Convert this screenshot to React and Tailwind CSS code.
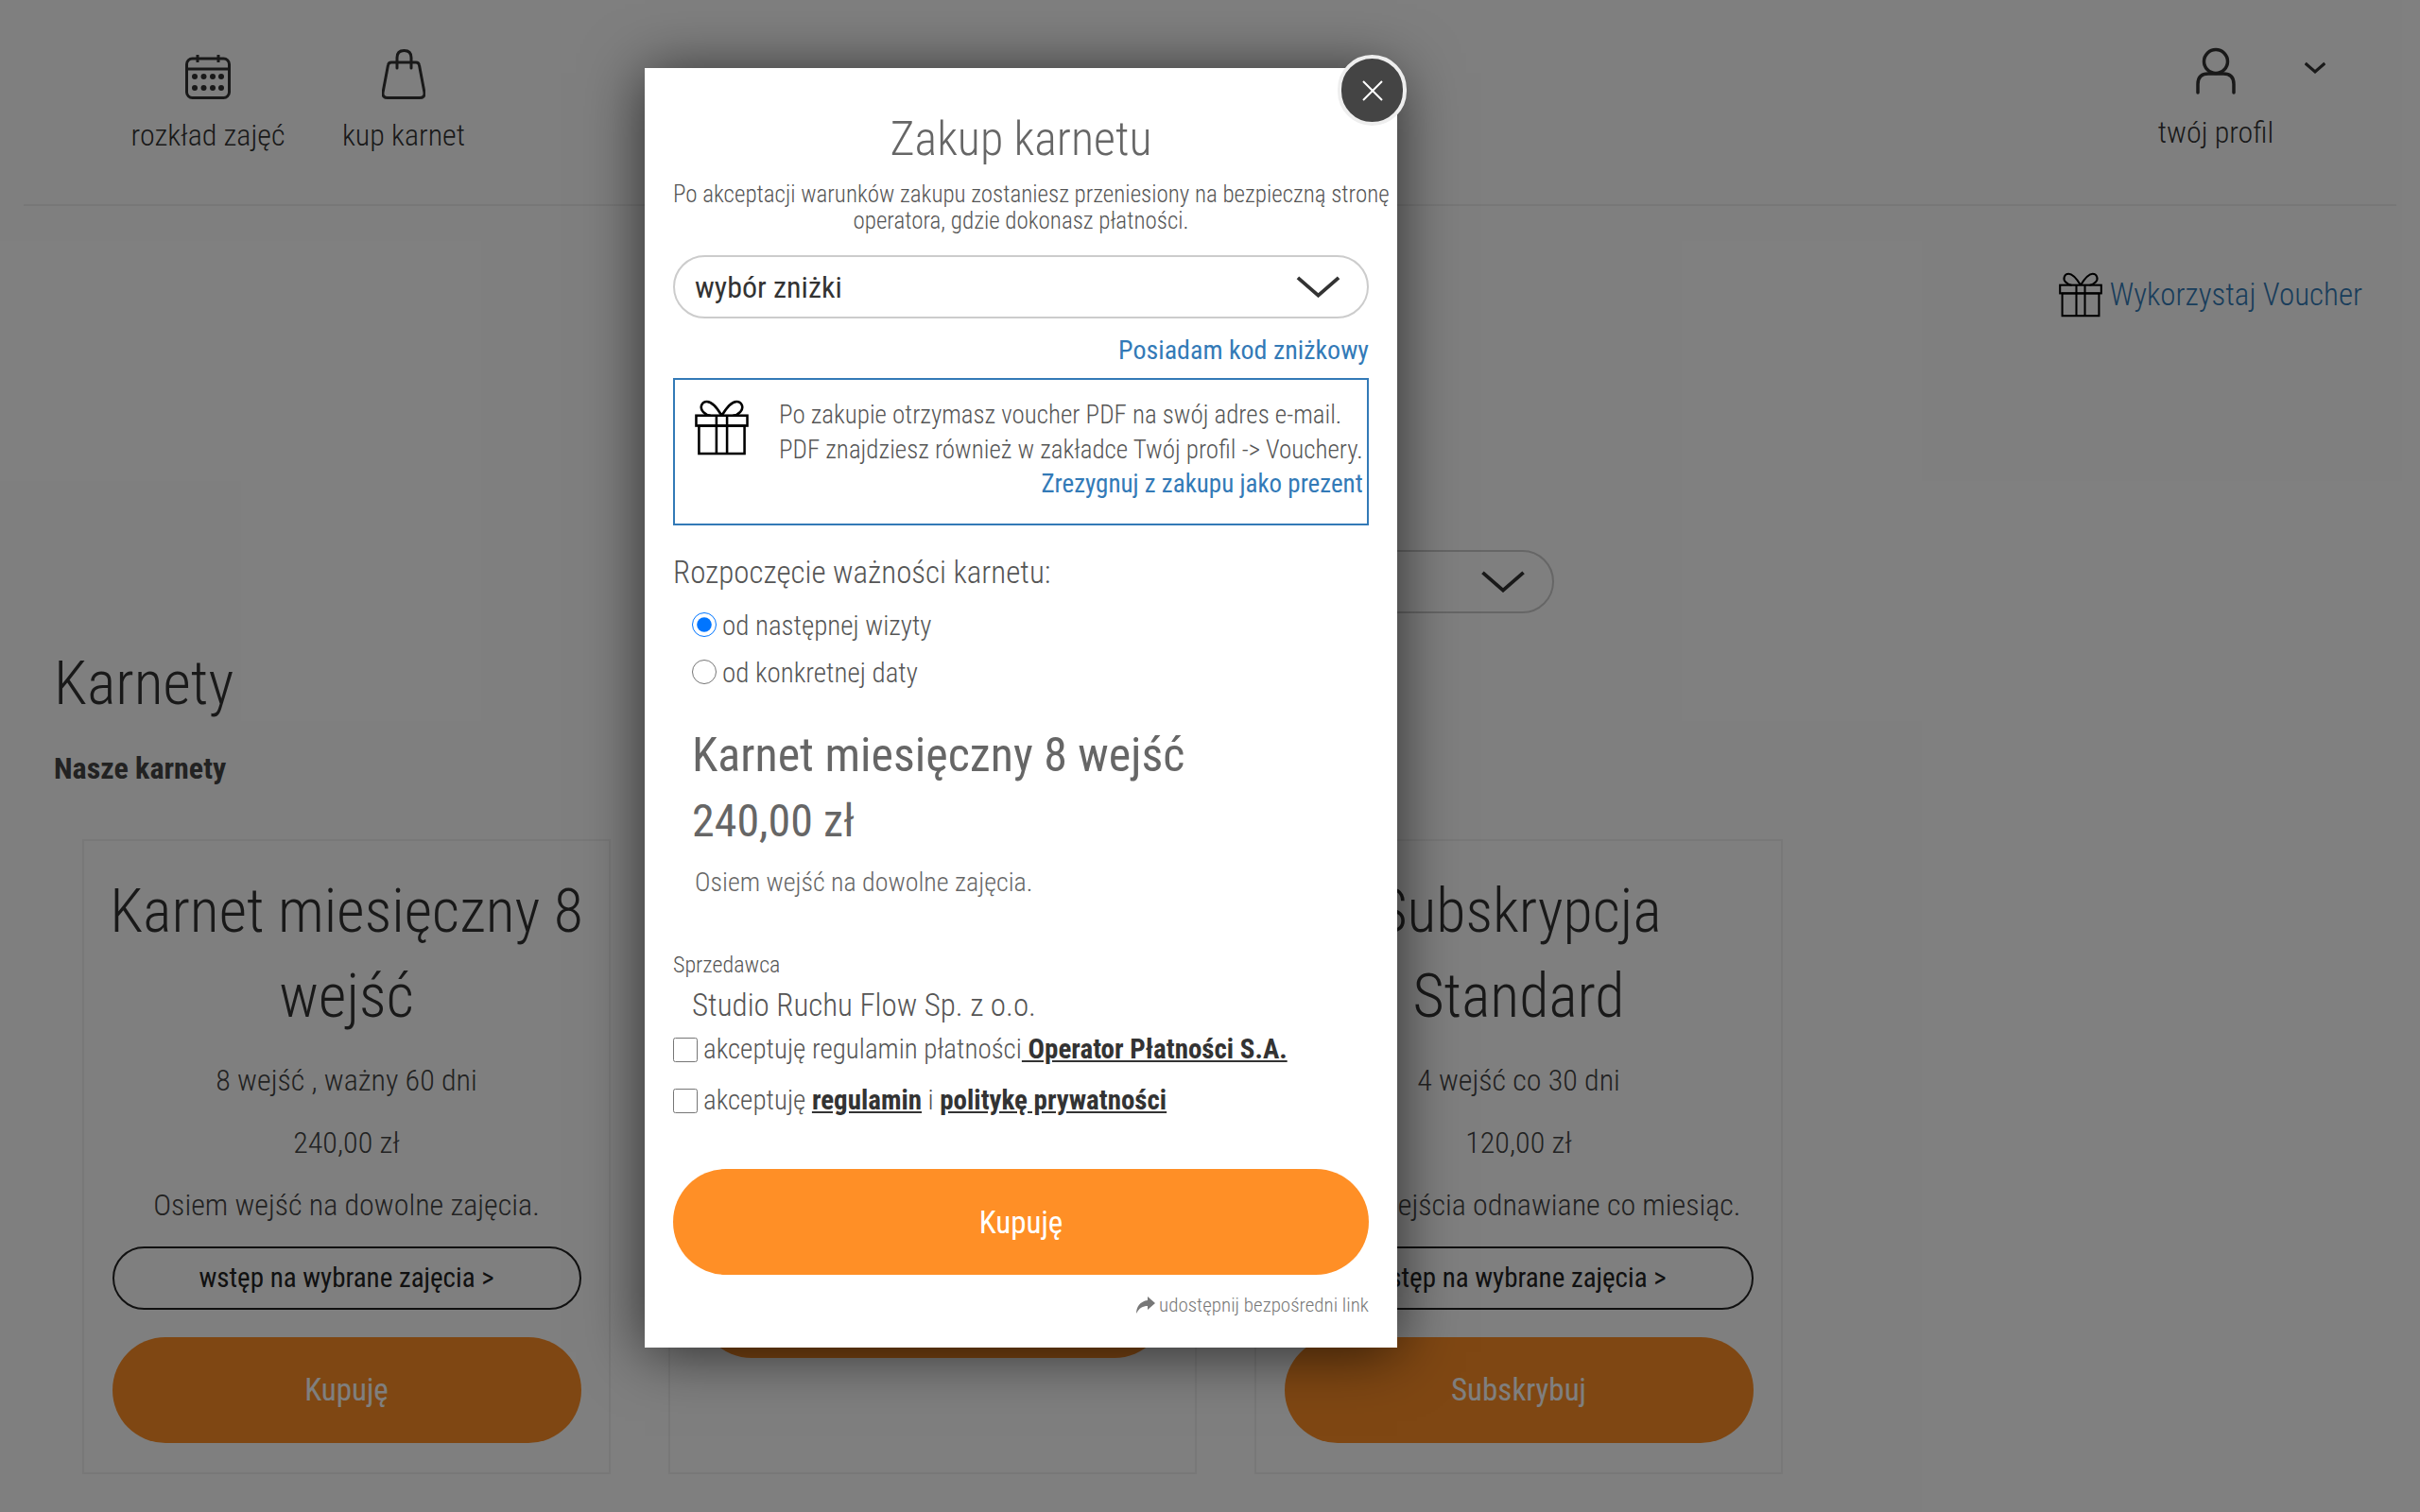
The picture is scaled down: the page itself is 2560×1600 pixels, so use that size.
const Calendar = ({ className }) => (
  <svg className={className} viewBox="0 0 48 48" fill="none" stroke="#333" strokeWidth="3">
    <rect x="1.5" y="5" width="45" height="41.5" rx="6" />
    <path d="M1.5 16h45M13 1v8M35 1v8" />
    <g fill="#333" stroke="none">
      {[10, 19.5, 29, 38].map((x) => (
        <g key={x}>
          <circle cx={x} cy="24" r="3" />
          <circle cx={x} cy="36" r="3" />
        </g>
      ))}
    </g>
  </svg>
);

const Bag = ({ className }) => (
  <svg className={className} viewBox="0 0 46 53" fill="none" stroke="#333" strokeWidth="3" strokeLinecap="round" strokeLinejoin="round">
    <path d="M10 14h26q3 0 3.500 3L45 46q.5 5.500-5 5.500H6q-5.500 0-5-5.500L6.500 17q.5-3 3.500-3z" />
    <path d="M16 20V9q0-7.500 7.500-7.500T31 9v11" />
  </svg>
);

const User = ({ className }) => (
  <svg className={className} viewBox="0 0 42 50" fill="none" stroke="#333" strokeWidth="3.500" strokeLinecap="round">
    <circle cx="21" cy="15" r="12.500" />
    <path d="M2 48V39q0-11 11-11h16q11 0 11 11v9" />
  </svg>
);

const Gift = ({ className }) => (
  <svg className={className} viewBox="0 0 58 60" fill="none" stroke="#000" strokeWidth="2.600">
    <path d="M29 17C24 9 19 2 13 2 7 2 5 9 9 13c2 2 5 4 8 4M29 17c5-8 10-15 16-15 6 0 8 7 4 11-2 2-5 4-8 4" />
    <rect x="1.500" y="17" width="55" height="11" />
    <rect x="4.500" y="28" width="49" height="30" />
    <path d="M23.300 17v41M34.700 17v41" />
  </svg>
);

const Chevron = ({ className, stroke = "#333", width = 4 }) => (
  <svg className={className} viewBox="0 0 48 24" fill="none" stroke={stroke} strokeWidth={width}>
    <path d="M1.500 2 24 21.500 46.500 2" />
  </svg>
);

function Card({ title, sub, price, desc, cta }) {
  return (
    <div className="w-[559px] h-[672px] border-2 border-[#f0f0f0] flex flex-col items-center px-[29px] pt-[30px] text-center text-[#444]">
      <h3 className="text-[64px] leading-[90px] text-[#333] font-light whitespace-nowrap">{title}</h3>
      <p className="text-[32px] leading-[66px] mt-[10px] font-light whitespace-nowrap">{sub}</p>
      <p className="text-[32px] leading-[66px] font-light whitespace-nowrap">{price}</p>
      <p className="text-[32px] leading-[66px] font-light whitespace-nowrap">{desc}</p>
      <div className="w-[496px] h-[67px] mt-[11px] shrink-0 rounded-full border-2 border-[#222] flex items-center justify-center text-[29px] text-[#222]">
        wstęp na wybrane zajęcia &gt;
      </div>
      <div className="w-[496px] h-[112px] mt-[29px] shrink-0 rounded-full bg-[#ff8f26] flex items-center justify-center text-[33px] text-white">
        {cta}
      </div>
    </div>
  );
}

function Background() {
  return (
    <div className="relative h-[1600px] bg-white text-[#333]">
      <header className="h-[218px] mx-[25px] border-b-2 border-[#eee] flex items-start justify-between">
        <nav className="flex pl-[113px] pt-[52px] gap-[60px]">
          <div className="flex flex-col items-center w-[164px]">
            <Calendar className="w-[48px] h-[48px] mt-[5px]" />
            <span className="text-[32px] leading-[40px] mt-[18px] font-light whitespace-nowrap">rozkład zajęć</span>
          </div>
          <div className="flex flex-col items-center w-[130px]">
            <Bag className="w-[46px] h-[53px]" />
            <span className="text-[32px] leading-[40px] mt-[18px] font-light whitespace-nowrap">kup karnet</span>
          </div>
        </nav>
        <div className="flex items-start pt-[50px] pr-[75px]">
          <div className="flex flex-col items-center w-[126px]">
            <User className="w-[42px] h-[50px]" />
            <span className="text-[32px] leading-[40px] mt-[20px] font-light whitespace-nowrap">twój profil</span>
          </div>
          <Chevron className="w-[22px] h-[13px] mt-[15px] ml-[31px]" width={7} />
        </div>
      </header>
      <div className="flex justify-end items-center pr-[61px] mt-[70px] gap-[8px]">
        <Gift className="w-[46px] h-[48px]" />
        <span className="text-[33px] leading-[48px] text-[#337ab7] font-light">Wykorzystaj Voucher</span>
      </div>
      <div className="ml-[900px] mt-[246px] w-[744px] h-[67px] rounded-full border-2 border-[#ccc] flex items-center justify-end pr-[29px]">
        <Chevron className="w-[46px] h-[23px]" />
      </div>
      <h1 className="ml-[57px] mt-[35px] text-[64px] leading-[80px] text-[#333] font-light">Karnety</h1>
      <h2 className="ml-[57px] mt-[29px] text-[32px] leading-[40px] font-bold text-[#444]">Nasze karnety</h2>
      <section className="flex ml-[87px] mt-[55px] gap-[61px]">
        <Card title={<>Karnet miesięczny 8<br />wejść</>} sub="8 wejść , ważny 60 dni" price="240,00 zł" desc="Osiem wejść na dowolne zajęcia." cta="Kupuję" />
        <Card title="Karnet" sub="4 wejścia, ważny 30 dni" price="140,00 zł" desc="Cztery wejścia na dowolne zajęcia." cta="Kupuję" />
        <Card title={<>Subskrypcja<br />Standard</>} sub="4 wejść co 30 dni" price="120,00 zł" desc="Cztery wejścia odnawiane co miesiąc." cta="Subskrybuj" />
      </section>
    </div>
  );
}

function Modal() {
  return (
    <div className="absolute left-[682px] top-[72px] w-[796px] h-[1354px] bg-white shadow-[0_5px_60px_rgba(0,0,0,0.65)] px-[30px] text-[#555]">
      <button className="absolute left-[733px] top-[-14px] w-[73px] h-[75px] rounded-full bg-[#444] border-[4px] border-[#eee] flex items-center justify-center">
        <svg className="w-[22px] h-[22px]" viewBox="0 0 22 22" stroke="#fff" strokeWidth="2" fill="none">
          <path d="M1 1l20 20M21 1L1 21" />
        </svg>
      </button>
      <h2 className="pt-[45px] text-[50px] leading-[60px] text-center text-[#666] font-light">Zakup karnetu</h2>
      <p className="mt-[15px] text-[25px] leading-[28px] text-center whitespace-nowrap font-light">
        Po akceptacji warunków zakupu zostaniesz przeniesiony na bezpieczną stronę<br />operatora, gdzie dokonasz płatności.
      </p>
      <div className="mt-[22px] h-[67px] rounded-full border-2 border-[#ccc] flex items-center justify-between pl-[21px] pr-[28px]">
        <span className="text-[32px] text-[#333]">wybór zniżki</span>
        <Chevron className="w-[47px] h-[23px]" />
      </div>
      <div className="mt-[16px] text-right text-[28px] leading-[36px] text-[#337ab7]">Posiadam kod zniżkowy</div>
      <div className="mt-[11px] h-[156px] border-2 border-[#337ab7] flex pl-[21px] pr-[20px] pt-[19px] gap-[32px]">
        <Gift className="w-[57px] h-[59px] mt-[2px] shrink-0" />
        <div className="flex-1 text-[27px] leading-[37px] font-light">
          <div className="whitespace-nowrap">Po zakupie otrzymasz voucher PDF na swój adres e-mail.</div>
          <div className="whitespace-nowrap">PDF znajdziesz również w zakładce Twój profil -&gt; Vouchery.</div>
          <div className="text-right text-[#337ab7] leading-[35px] font-normal">Zrezygnuj z zakupu jako prezent</div>
        </div>
      </div>
      <div className="mt-[30px] text-[33px] leading-[40px] font-light">Rozpoczęcie ważności karnetu:</div>
      <label className="flex items-center gap-[6px] ml-[20px] mt-[10px] h-[50px] text-[29px] font-light">
        <input type="radio" name="start" defaultChecked className="w-[26px] h-[26px] m-0 shrink-0" />
        <span className="pt-[3px]">od następnej wizyty</span>
      </label>
      <label className="flex items-center gap-[6px] ml-[20px] h-[50px] text-[29px] font-light">
        <input type="radio" name="start" className="w-[26px] h-[26px] m-0 shrink-0" />
        <span className="pt-[3px]">od konkretnej daty</span>
      </label>
      <div className="ml-[20px] mt-[28px] text-[50px] leading-[70px] text-[#666]">Karnet miesięczny 8 wejść</div>
      <div className="ml-[20px] text-[48px] leading-[70px] text-[#666]">240,00 zł</div>
      <div className="ml-[23px] mt-[10px] text-[28px] leading-[40px] text-[#666] font-light">Osiem wejść na dowolne zajęcia.</div>
      <div className="mt-[51px] text-[24px] leading-[32px] font-light">Sprzedawca</div>
      <div className="ml-[20px] mt-[5px] text-[33px] leading-[44px] font-light">Studio Ruchu Flow Sp. z o.o.</div>
      <label className="flex items-center gap-[6px] mt-[5px] h-[40px] text-[29px] font-light">
        <input type="checkbox" className="w-[26px] h-[26px] m-0 shrink-0" />
        <span className="whitespace-pre">akceptuję regulamin płatności<a className="font-bold underline text-[#333]"> Operator Płatności S.A.</a></span>
      </label>
      <label className="flex items-center gap-[6px] mt-[14px] h-[40px] text-[29px] font-light">
        <input type="checkbox" className="w-[26px] h-[26px] m-0 shrink-0" />
        <span className="whitespace-pre">akceptuję <a className="font-bold underline text-[#333]">regulamin</a> i <a className="font-bold underline text-[#333]">politykę prywatności</a></span>
      </label>
      <button className="block w-full h-[112px] mt-[52px] pt-[2px] rounded-full bg-[#ff8f26] text-white text-[33px]">Kupuję</button>
      <div className="mt-[17px] flex items-center justify-end gap-[4px] text-[21px] leading-[30px] text-[#777] font-light">
        <svg className="w-[20px] h-[18px]" viewBox="0 0 20 18" fill="#777"><path d="M12 0l8 7-8 7V10C7 10 3 12 0 18c0-7 4-13 12-14z" /></svg>
        udostępnij bezpośredni link
      </div>
    </div>
  );
}

export default function App() {
  return (
    <div className="relative w-[2560px] h-[1600px] overflow-hidden font-['Roboto',sans-serif] [font-stretch:75%]">
      <Background />
      <div className="absolute inset-0 bg-black/50" />
      <Modal />
    </div>
  );
}
